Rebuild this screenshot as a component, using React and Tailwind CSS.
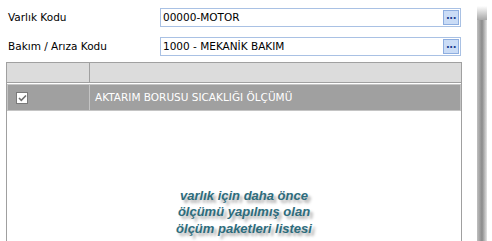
import React from "react"

const font = { fontFamily: "Tahoma, 'DejaVu Sans', 'Liberation Sans', sans-serif" }

const LookupInput = ({ value }) => (
  <div className="flex h-[19px] w-[301px] items-center border border-[#a9c1e4] bg-white pl-[2px] pr-[1px]">
    <span className="flex-1 text-[10.5px] leading-none text-black">{value}</span>
    <button className="flex h-[15px] w-[16px] items-center justify-center border border-[#8eaee0] bg-[#cadcf6]">
      <span className="mt-[-3px] text-[10px] font-bold leading-none tracking-[-0.5px] text-[#1d3f8f]">...</span>
    </button>
  </div>
)

const FormRow = ({ label, value }) => (
  <div className="flex items-center">
    <label className="w-[152px] text-[10.5px] text-black">{label}</label>
    <LookupInput value={value} />
  </div>
)

export default function App() {
  return (
    <div className="relative flex h-[241px] w-[492px] overflow-hidden bg-white" style={font}>
      <div className="flex w-[470px] flex-col pl-[8px] pt-[8px]">
        <div className="flex flex-col gap-[10px]">
          <FormRow label="Varlık Kodu" value="00000-MOTOR" />
          <FormRow label="Bakım / Arıza Kodu" value="1000 - MEKANİK BAKIM" />
        </div>

        {/* grid */}
        <div className="ml-[-2px] mt-[6px] flex w-[456px] flex-1 flex-col border border-b-0 border-[#a0a0a0]">
          <div className="flex h-[20px] border-b border-[#a0a0a0] bg-[#dcdcdc]">
            <div className="w-[83px] border-r border-[#a0a0a0]" />
            <div className="flex-1" />
          </div>
          <div className="mt-[1px] flex h-[27px] border border-[#c4c4c4] bg-[#a0a0a0]">
            <div className="flex w-[82px] items-center border-r border-[#c4c4c4] pl-[8px]">
              <span className="flex h-[12px] w-[12px] items-center justify-center border border-[#7a7a7a] bg-white">
                <svg width="9" height="8" viewBox="0 0 9 8">
                  <path d="M1 4 L3.3 6.3 L8 1.5" fill="none" stroke="#6f6f6f" strokeWidth="1.6" />
                </svg>
              </span>
            </div>
            <div className="flex flex-1 items-center pl-[5px] text-[10.5px] text-white">
              AKTARIM BORUSU SICAKLIĞI ÖLÇÜMÜ
            </div>
          </div>
          <div className="flex flex-1 items-end justify-center pb-[4px] pl-[20px]">
            <p
              className="text-center text-[13px] font-bold italic leading-[16.5px] text-[#2d6c7c]"
              style={{ fontFamily: "'Liberation Sans', Arial, sans-serif", textShadow: "3px 3px 3px rgba(0,0,0,0.35)" }}
            >
              varlık için daha önce
              <br />
              ölçümü yapılmış olan
              <br />
              ölçüm paketleri listesi
            </p>
          </div>
        </div>
      </div>

      {/* window shadow */}
      <div className="ml-[7px] mt-[6px] flex w-[10px] flex-col">
        <div className="h-[14px] bg-gradient-to-b from-white to-[#a8a8a8]" />
        <div className="flex-1 bg-gradient-to-r from-[#c0c0c0] via-[#8a8a8a] to-[#e4e4e4]" />
      </div>
    </div>
  )
}
